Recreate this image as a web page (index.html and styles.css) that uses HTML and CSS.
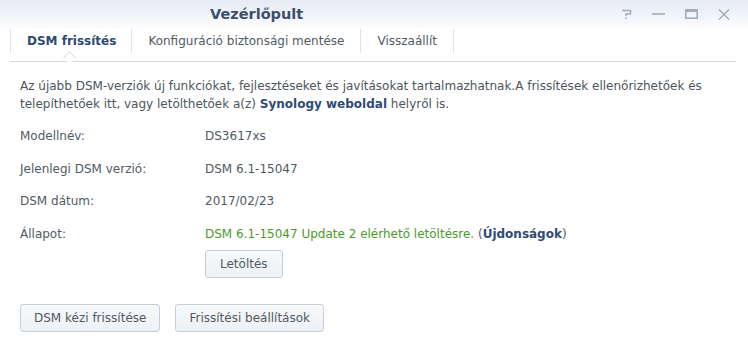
FILE: index.html
```html
<!DOCTYPE html>
<html>
<head>
  <title>Vezérlőpult</title>
  <link rel="stylesheet" href="styles.css">
</head>
<body>

  <div class="window">

    <!-- Title bar -->
    <div class="titlebar">
      <span class="title">Vezérlőpult</span>
      <div class="controls">
        <svg width="11" height="10" viewBox="0 0 11 10"><path d="M1 1.5h8.5v3.5H5v2" fill="none" stroke="#a3adb8" stroke-width="1.6"/><rect x="4.2" y="8.4" width="1.6" height="1.6" fill="#a3adb8"/></svg>
        <svg width="13" height="10" viewBox="0 0 13 10"><rect x="0" y="4.2" width="13" height="1.6" fill="#a3adb8"/></svg>
        <svg width="13" height="10" viewBox="0 0 13 10"><rect x="0.8" y="0.8" width="11.4" height="8.4" fill="none" stroke="#a3adb8" stroke-width="1.6"/><rect x="0" y="0" width="13" height="3" fill="#a3adb8"/></svg>
        <svg width="12" height="11" viewBox="0 0 12 11"><path d="M1 0.5l10 10M11 0.5l-10 10" stroke="#a3adb8" stroke-width="1.5"/></svg>
      </div>
    </div>

    <!-- Tabs -->
    <div class="tabs">
      <div class="tab active">DSM frissítés</div>
      <div class="tab">Konfiguráció biztonsági mentése</div>
      <div class="tab last">Visszaállít</div>
    </div>

    <!-- Content -->
    <div class="content">
      <p class="intro">Az újabb DSM-verziók új funkciókat, fejlesztéseket és javításokat tartalmazhatnak.A frissítések ellenőrizhetőek és telepíthetőek itt, vagy letölthetőek a(z) <a href="#">Synology weboldal</a> helyről is.</p>

      <div class="info">
        <div class="label">Modellnév:</div>
        <div class="value">DS3617xs</div>
        <div class="label">Jelenlegi DSM verzió:</div>
        <div class="value">DSM 6.1-15047</div>
        <div class="label">DSM dátum:</div>
        <div class="value">2017/02/23</div>
        <div class="label">Állapot:</div>
        <div class="value"><span class="ok">DSM 6.1-15047 Update 2 elérhető letöltésre.</span> (<a href="#">Újdonságok</a>)</div>
        <div class="btn-row"></div>
        <div class="btn-row"><button>Letöltés</button></div>
      </div>

      <div class="actions">
        <button>DSM kézi frissítése</button>
        <button>Frissítési beállítások</button>
      </div>
    </div>

  </div>

</body>
</html>
```

FILE: styles.css
```css
body {
  margin: 0;
  font-family: "DejaVu Sans", Verdana, sans-serif;
  font-size: 12px;
  color: #505a64;
  background: #fff;
}
.window {
  width: 748px;
  height: 349px;
  overflow: hidden;
  background: #fff;
}
.titlebar {
  height: 28px;
  display: flex;
  align-items: center;
  background: linear-gradient(#e4ebf3, #fbfcfe);
}
.title {
  margin-left: 210px;
  font-size: 14.5px;
  font-weight: bold;
  color: #3c4f6c;
}
.controls {
  margin-left: auto;
  margin-right: 18px;
  display: flex;
  align-items: center;
  gap: 20px;
}
.controls svg {
  display: block;
}
.tabs {
  margin: 0 12px 0 10px;
  height: 32px;
  padding-top: 1px;
  display: flex;
  border-bottom: 1px solid #d6dbe1;
}
.tab {
  padding: 0 16px 0 16px;
  height: 24px;
  line-height: 24px;
  border-left: 1px solid #e0e4e9;
  color: #505a64;
}
.tab.last {
  border-right: 1px solid #e0e4e9;
}
.tab.active {
  padding: 0 15px 0 16px;
  font-weight: bold;
  color: #2f4a6e;
  position: relative;
}
.tab.active::after {
  content: "";
  position: absolute;
  left: 54px;
  bottom: -9px;
  width: 8px;
  height: 8px;
  background: #fff;
  border-left: 1px solid #d6dbe1;
  border-top: 1px solid #d6dbe1;
  transform: rotate(45deg);
}
.content {
  padding: 0 20px;
}
.intro {
  margin: 15px 0 0 0;
  line-height: 18px;
  color: #4b5560;
}
a {
  color: #2e4b74;
  font-weight: bold;
  text-decoration: none;
}
.info {
  margin-top: 14px;
  display: grid;
  grid-template-columns: 185px auto;
  grid-auto-rows: 18px;
  row-gap: 14.5px;
  line-height: 18px;
}
.btn-row {
  height: 28px;
  margin-top: -7px;
}
.ok {
  color: #4c9a2a;
}
button {
  font-family: "DejaVu Sans", Verdana, sans-serif;
  font-size: 12px;
  color: #505a64;
  height: 28px;
  padding: 0 14px;
  background: linear-gradient(#f7f9fb, #edf1f5);
  border: 1px solid #c6ced7;
  border-radius: 3px;
}
.actions {
  margin-top: 29px;
  display: flex;
  gap: 15px;
}
.actions button {
  padding: 0 13px;
}
```
